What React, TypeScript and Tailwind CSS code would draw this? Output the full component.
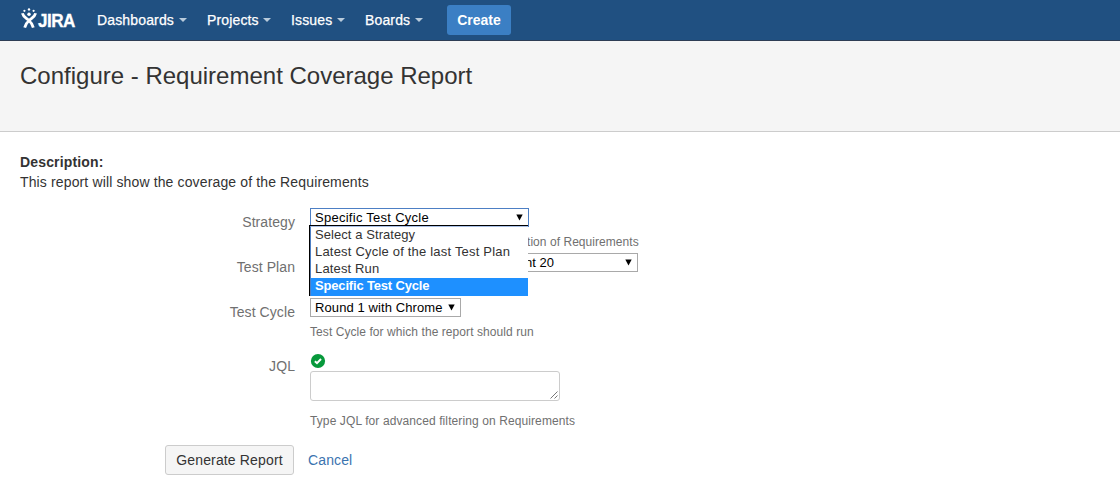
import React from "react"

const NAV_ITEMS = [
  { label: "Dashboards", className: "w-[77px]" },
  { label: "Projects", className: "w-[51px]" },
  { label: "Issues", className: "w-[41px]" },
  { label: "Boards", className: "w-[45px]" },
]

const STRATEGIES = [
  { label: "Select a Strategy", spacing: "tracking-[0.07px]" },
  { label: "Latest Cycle of the last Test Plan", spacing: "tracking-[0.2px]" },
  { label: "Latest Run", spacing: "tracking-[0.15px]" },
  { label: "Specific Test Cycle", spacing: "tracking-[-0.17px]" },
]

const SELECTED = "Specific Test Cycle"

function JiraLogo() {
  return (
    <div className="flex h-[22px] w-[55px] items-start">
      <svg width="17" height="22" viewBox="0 0 17 22" fill="none" className="shrink-0">
        <circle cx="3.4" cy="2.8" r="1.1" fill="#fff" />
        <circle cx="8" cy="1.4" r="1.2" fill="#fff" />
        <circle cx="12.6" cy="2.8" r="1.1" fill="#fff" />
        <circle cx="8" cy="6.2" r="1.7" fill="#fff" />
        <path
          d="M1.4 5.2C2.2 8.8 4.8 9.8 7.4 12C9.8 14 11.4 16 12.3 19.6M14.6 5.2C13.8 8.8 11.2 9.8 8.6 12C6.2 14 4.6 16 3.7 19.6"
          stroke="#fff"
          strokeWidth="2.8"
        />
      </svg>
      <span className="origin-left scale-x-[0.9] pt-[3px] text-[19px] leading-[20px] font-bold tracking-[-0.6px] text-white [-webkit-text-stroke:0.3px_white]">
        JIRA
      </span>
    </div>
  )
}

function SelectArrow() {
  return (
    <svg width="7" height="7" viewBox="0 0 7 7" className="shrink-0">
      <path d="M0.3 0.5H6.7L3.5 6.5Z" fill="#000" />
    </svg>
  )
}

interface SelectBoxProps {
  className: string
  children: React.ReactNode
}

function SelectBox({ className, children }: SelectBoxProps) {
  return (
    <div
      className={`mt-px flex h-[19px] items-center justify-between border bg-white pr-[5px] pl-1 text-[13px] leading-[17px] whitespace-nowrap text-black ${className}`}
    >
      {children}
      <SelectArrow />
    </div>
  )
}

interface FieldRowProps {
  label: string
  className: string
  children: React.ReactNode
}

function FieldRow({ label, className, children }: FieldRowProps) {
  return (
    <div className={`flex ${className}`}>
      <div className="w-[295px] shrink-0 pt-[5px] text-right text-sm leading-5 tracking-[0.08px] text-[#707070]">
        {label}
      </div>
      <div className="relative ml-[15px] flex flex-col items-start">{children}</div>
    </div>
  )
}

function StrategyMenu() {
  return (
    <div className="absolute top-[18px] -left-px w-[219px] border-t border-l border-black bg-white">
      <ul className="border-t border-l border-t-[#a9c0e6] border-l-[#4d7fc4] text-[13px] leading-[15px] whitespace-nowrap text-[#333]">
        {STRATEGIES.map(({ label, spacing }) => (
          <li
            key={label}
            className={`pl-1 ${spacing} ${label === SELECTED ? "h-[18px] bg-[#1e90ff] font-bold text-white" : "h-[17px]"}`}
          >
            {label}
          </li>
        ))}
      </ul>
    </div>
  )
}

export default function App() {
  return (
    <div className="h-[490px] w-[1120px] overflow-hidden bg-white font-['Liberation_Sans',Arial,sans-serif] text-[#333]">
      <header className="flex h-[41px] items-start border-b border-[#2e3d54] bg-[#205081] pl-[21px]">
        <div className="pt-2">
          <JiraLogo />
        </div>
        <nav className="ml-[21px] flex h-10 items-center gap-5 text-sm tracking-[0.15px] text-white [-webkit-text-stroke:0.25px_white]">
          {NAV_ITEMS.map(({ label, className }) => (
            <div key={label} className="flex items-center gap-[5px]">
              <span className={className}>{label}</span>
              <svg width="8" height="4" viewBox="0 0 8 4">
                <path d="M0 0H8L4 4Z" fill="#b9cbdc" />
              </svg>
            </div>
          ))}
        </nav>
        <button className="mt-[5px] ml-6 h-[30px] w-16 rounded-[3px] bg-[#3b7fc4] text-sm font-bold text-white">
          Create
        </button>
      </header>

      <div className="h-[91px] border-b border-[#ccc] bg-[#f5f5f5] pt-5 pl-5">
        <h1 className="text-2xl leading-[30px]">Configure - Requirement Coverage Report</h1>
      </div>

      <main className="pt-5 text-sm">
        <div className="pl-5 leading-5">
          <strong className="block tracking-[0.15px]">Description:</strong>
          <p className="tracking-[0.135px]">This report will show the coverage of the Requirements</p>
        </div>

        <FieldRow label="Strategy" className="mt-[15px] h-[45px]">
          <SelectBox className="w-[219px] border-[#4d7fc4]">
            <span className="tracking-[0.27px]">Specific Test Cycle</span>
          </SelectBox>
          <div className="mt-[7px] pl-[217px] text-xs leading-4 tracking-[0.05px] whitespace-nowrap text-[#707070]">
            tion of Requirements
          </div>
          <div className="absolute top-0 left-0 z-20">
            <StrategyMenu />
          </div>
        </FieldRow>

        <FieldRow label="Test Plan" className="h-[45px]">
          <SelectBox className="w-[328px] border-[#a9a9a9]">
            <span className="pl-[210px]">nt 20</span>
          </SelectBox>
        </FieldRow>

        <FieldRow label="Test Cycle" className="h-[54px]">
          <SelectBox className="w-[151px] border-[#a9a9a9]">
            <span className="tracking-[0.1px]">Round 1 with Chrome</span>
          </SelectBox>
          <div className="mt-[7px] text-xs leading-4 tracking-[0.07px] text-[#707070]">
            Test Cycle for which the report should run
          </div>
        </FieldRow>

        <FieldRow label="JQL" className="h-[94px]">
          <svg width="16" height="16" viewBox="0 0 16 16" className="mt-[2px]">
            <circle cx="8" cy="8" r="7.1" fill="#07993b" />
            <path d="M4.9 8.2L7 10.2L11 6" fill="none" stroke="#fff" strokeWidth="2" />
          </svg>
          <div className="mt-[2px] flex h-[30px] w-[250px] items-end justify-end rounded-[3px] border border-[#ccc] pr-px pb-px">
            <svg width="8" height="8" viewBox="0 0 8 8">
              <path d="M0.5 7.5L7.5 0.5M4.5 7.5L7.5 4.5" stroke="#666" strokeWidth="0.9" />
            </svg>
          </div>
          <div className="mt-3 text-xs leading-4 tracking-[0.1px] text-[#707070]">
            Type JQL for advanced filtering on Requirements
          </div>
        </FieldRow>

        <div className="flex items-center pl-[165px] tracking-[0.12px]">
          <button className="h-[30px] w-[129px] rounded-[3px] border border-[#ccc] bg-[#f5f5f5] tracking-[0.15px] whitespace-nowrap">
            Generate Report
          </button>
          <a className="ml-[14px] text-[#3b73af]">Cancel</a>
        </div>
      </main>
    </div>
  )
}
